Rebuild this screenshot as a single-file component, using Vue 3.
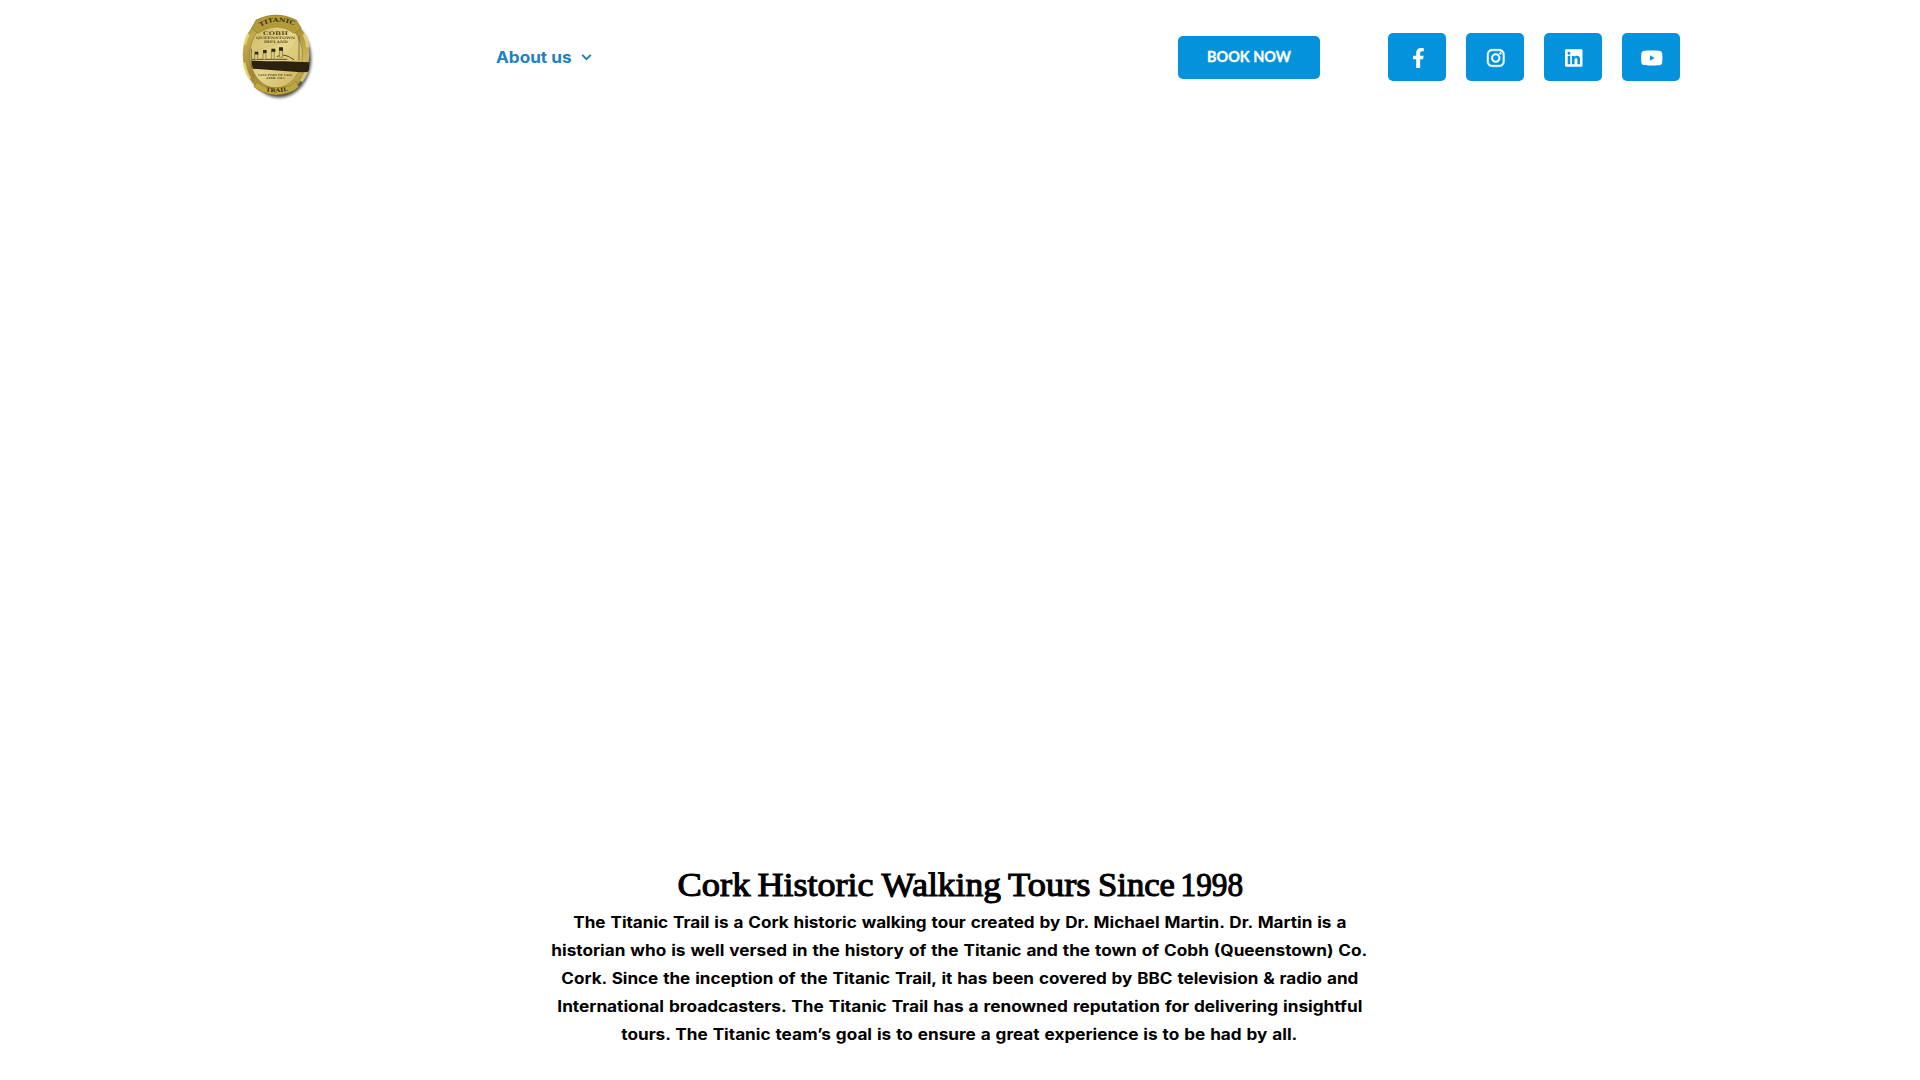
<script setup>
const socials = [
  { name: 'Facebook', w: 12, h: 20, box: '22 0 256 512', d: 'M279.1 288l14.3-92.7h-89v-60.1c0-25.3 12.4-50.1 52.2-50.1h40.4V6.3S260.4 0 225.4 0c-73.2 0-121.1 44.4-121.1 124.7v70.6H22.9V288h81.4v224h100.2V288z' },
  { name: 'Instagram', w: 17.5, h: 20, box: '0 0 448 512', d: 'M224.1 141c-63.6 0-114.9 51.3-114.9 114.9s51.3 114.9 114.9 114.9S339 319.5 339 255.900 287.700 141 224.100 141zm0 189.600c-41.100 0-74.700-33.500-74.700-74.700s33.500-74.700 74.700-74.700 74.700 33.500 74.700 74.700-33.600 74.700-74.700 74.700zm146.400-194.300c0 14.900-12 26.800-26.800 26.800-14.900 0-26.800-12-26.800-26.800s12-26.800 26.800-26.800 26.800 12 26.800 26.800zm76.100 27.200c-1.700-35.900-9.900-67.700-36.200-93.900-26.200-26.200-58-34.400-93.900-36.200-37-2.100-147.900-2.100-184.900 0-35.800 1.700-67.600 9.900-93.900 36.100s-34.400 58-36.200 93.900c-2.100 37-2.100 147.900 0 184.900 1.700 35.900 9.900 67.700 36.200 93.900s58 34.400 93.900 36.200c37 2.100 147.900 2.100 184.900 0 35.900-1.700 67.700-9.900 93.900-36.200 26.200-26.200 34.400-58 36.200-93.900 2.100-37 2.100-147.800 0-184.800zM398.800 388c-7.800 19.600-22.900 34.700-42.600 42.600-29.500 11.700-99.500 9-132.100 9s-102.700 2.600-132.100-9c-19.600-7.800-34.700-22.900-42.600-42.600-11.700-29.500-9-99.500-9-132.100s-2.600-102.700 9-132.100c7.800-19.600 22.900-34.700 42.600-42.600 29.500-11.700 99.500-9 132.100-9s102.700-2.600 132.100 9c19.600 7.800 34.700 22.900 42.600 42.600 11.700 29.500 9 99.500 9 132.100s2.700 102.700-9 132.100z', bold: true },
  { name: 'LinkedIn', w: 17.5, h: 20, box: '0 0 448 512', d: 'M416 32H31.900C14.300 32 0 46.500 0 64.300v383.400C0 465.500 14.300 480 31.900 480H416c17.600 0 32-14.500 32-32.300V64.300c0-17.800-14.400-32.300-32-32.300zM135.400 416H69V202.200h66.500V416zm-33.200-243c-21.300 0-38.500-17.300-38.500-38.500S80.900 96 102.200 96c21.200 0 38.500 17.300 38.500 38.500 0 21.300-17.200 38.500-38.500 38.500zm282.100 243h-66.400V312c0-24.800-.5-56.700-34.500-56.700-34.600 0-39.900 27-39.900 54.900V416h-66.400V202.200h63.700v29.200h.9c8.900-16.800 30.600-34.500 62.900-34.500 67.200 0 79.700 44.300 79.700 101.900V416z' },
  { name: 'YouTube', w: 22.5, h: 20, box: '-14 0 576 512', d: 'M549.655 124.083c-6.281-23.650-24.787-42.276-48.284-48.597C458.781 64 288 64 288 64S117.220 64 74.629 75.486c-23.497 6.322-42.003 24.947-48.284 48.597-11.412 42.867-11.412 132.305-11.412 132.305s0 89.438 11.412 132.305c6.281 23.650 24.787 41.500 48.284 47.821C117.220 448 288 448 288 448s170.780 0 213.371-11.486c23.497-6.321 42.003-24.171 48.284-47.821 11.412-42.867 11.412-132.305 11.412-132.305s0-89.438-11.412-132.305zM241 324V188l118 68z' },
]

const heading = [
  { t: 'Cork', x: 17.5, w: 73 },
  { t: 'Historic', x: 97.5, w: 116 },
  { t: 'Walking', x: 221.500, w: 119.5 },
  { t: 'Tours', x: 348, w: 82.5 },
  { t: 'Since', x: 438, w: 77 },
  { t: '1998', x: 520.500, w: 62.5 },
]

const lines = [
  { t: 'The Titanic Trail is a Cork historic walking tour created by Dr. Michael Martin. Dr. Martin is a', w: 773 },
  { t: 'historian who is well versed in the history of the Titanic and the town of Cobh (Queenstown) Co.', w: 816 },
  { t: 'Cork. Since the inception of the Titanic Trail, it has been covered by BBC television & radio and', w: 797 },
  { t: 'International broadcasters. The Titanic Trail has a renowned reputation for delivering insightful', w: 805 },
  { t: 'tours. The Titanic team’s goal is to ensure a great experience is to be had by all.', w: 676 },
]
</script>

<template>
  <div class="page">
    <header class="header">
      <svg class="logo" viewBox="0 0 285 300" role="img" aria-label="Titanic Trail">
        <defs>
          <linearGradient id="gold" x1="0" y1="0" x2="1" y2="1">
            <stop offset="0" stop-color="#8a7320" />
            <stop offset=".2" stop-color="#c2aa4c" />
            <stop offset=".45" stop-color="#a18630" />
            <stop offset=".75" stop-color="#cdb75a" />
            <stop offset="1" stop-color="#7d6618" />
          </linearGradient>
          <linearGradient id="face" x1="0" y1="0" x2="1" y2="1">
            <stop offset="0" stop-color="#cdb55c" />
            <stop offset=".5" stop-color="#e6d68e" />
            <stop offset="1" stop-color="#c9b058" />
          </linearGradient>
          <filter id="soft" x="-20%" y="-20%" width="140%" height="140%"><feGaussianBlur stdDeviation="4.500" /></filter>
          <path id="arcTop" d="M83 67Q139 29 201 63" />
          <path id="arcBottom" d="M99 253Q139 265 184 251" />
        </defs>
        <ellipse cx="147" cy="158" rx="97" ry="117" fill="#333" opacity=".85" filter="url(#soft)" />
        <ellipse cx="138" cy="146" rx="100" ry="119" fill="url(#gold)" />
        <g fill="none" stroke="#ecdc84" stroke-width="9" opacity=".8">
          <path d="M44 116Q47 99 56 84M222 84Q231 103 234 124M42 170Q47 200 60 218M214 226Q226 210 232 190" />
        </g>
        <ellipse cx="138" cy="147" rx="79" ry="99" fill="url(#face)" stroke="#806c20" stroke-width="1.5" />
        <path d="M65 67L78 42Q138 12 199 42L214 67L193 82Q139 43 84 82Z" fill="#b39b3a" stroke="#806d17" stroke-width="1.5" />
        <path d="M80 228L96 239Q139 252 181 239L197 225L206 242Q187 263 139 267Q94 263 72 242Z" fill="#c0a840" stroke="#806d17" stroke-width="1.500" />
        <g class="engraving">
          <text font-size="17"><textPath href="#arcTop" textLength="106" lengthAdjust="spacingAndGlyphs" startOffset="9">TITANIC</textPath></text>
          <g opacity=".8">
            <text x="99" y="86" font-size="15" textLength="75" lengthAdjust="spacingAndGlyphs">COBH</text>
            <text x="78" y="98" font-size="10" textLength="118" lengthAdjust="spacingAndGlyphs">QUEENSTOWN</text>
            <text x="102" y="112" font-size="10" textLength="72" lengthAdjust="spacingAndGlyphs">IRELAND</text>
            <text x="85" y="210" font-size="8" textLength="102" lengthAdjust="spacingAndGlyphs">LAST PORT OF CALL</text>
            <text x="109" y="220" font-size="8" textLength="55" lengthAdjust="spacingAndGlyphs">APRIL 1912</text>
          </g>
          <text font-size="16"><textPath href="#arcBottom" textLength="68" lengthAdjust="spacingAndGlyphs" startOffset="8">TRAIL</textPath></text>
        </g>
        <path d="M64 164L110 166L164 166L238 169L237 192L233 198L213 199L68 188Z" fill="#2a2110" />
        <path d="M66 160H172M140 152Q158 142 178 153L192 161" fill="none" stroke="#5c4d20" stroke-width="3" />
        <g fill="#2e270e">
          <path d="M74 137h11v9H74zM99 132h11v9H99zM124 128h12v10h-12zM147 124h12v11h-12z" />
        </g>
        <g fill="#dccb7c" stroke="#5c4d20" stroke-width="1.500">
          <path d="M74 145h9v16h-9zM99 141h9v20h-9zM124 137h9v23h-9zM148 134h10v20h-10z" />
        </g>
        <path d="M207 91V164M64 128V184" fill="none" stroke="#514516" stroke-width="2" />
        <path d="M64 137L207 94M170 154L207 94" fill="none" stroke="#806d30" stroke-width=".8" opacity=".5" />
      </svg>

      <a class="menu">
        <svg class="label" width="77" height="24"><text x="0" y="17.5" textLength="75.5" lengthAdjust="spacingAndGlyphs">About us</text></svg>
        <svg class="chevron" viewBox="0 0 11 8"><path d="M1.200 1.900L5.500 6.200L9.800 1.900" /></svg>
      </a>

      <a class="book">
        <svg width="84" height="20"><text x="0" y="15.300" textLength="84" lengthAdjust="spacingAndGlyphs">BOOK NOW</text></svg>
      </a>

      <nav class="socials">
        <a v-for="s in socials" :key="s.name" class="social" :aria-label="s.name">
          <svg :viewBox="s.box" :width="s.w" :height="s.h" :class="{ bold: s.bold }"><path :d="s.d" /></svg>
        </a>
      </nav>
    </header>

    <main class="intro">
      <h1>
        <svg width="600" height="48">
          <text y="36"><tspan v-for="h in heading" :key="h.t" :x="h.x" :textLength="h.w" lengthAdjust="spacingAndGlyphs">{{ h.t }}</tspan></text>
        </svg>
      </h1>
      <p>
        <svg v-for="l in lines" :key="l.t" :width="l.w" height="28">
          <text x="-0.7" y="20" :textLength="l.w" lengthAdjust="spacingAndGlyphs">{{ l.t }}</text>
        </svg>
      </p>
    </main>
  </div>
</template>

<style>
body {
  background: #fff;
  overflow: hidden;
}
</style>

<style scoped>
.page {
  width: 1440px;
  height: 1080px;
  margin: 0 auto;
  display: flex;
  flex-direction: column;
  font-family: Inter, "Open Sans", sans-serif;
}
svg {
  display: block;
  overflow: visible;
}
.header {
  height: 114px;
  display: flex;
  align-items: center;
}
.logo {
  width: 95px;
  height: 100px;
  margin: -2px 0 0 -10px;
}
.engraving {
  font-family: "DejaVu Serif", serif;
  font-weight: 700;
  fill: #3b2f0c;
}
.menu {
  display: flex;
  align-items: center;
  gap: 8px;
  margin-left: 171px;
}
.label {
  font-size: 15.5px;
  font-weight: 650;
  fill: #1b82bf;
}
.chevron {
  width: 11px;
  height: 8px;
  fill: none;
  stroke: #1b82bf;
  stroke-width: 2;
}
.book {
  width: 142px;
  height: 43px;
  margin-left: auto;
  margin-right: 68px;
  display: flex;
  align-items: center;
  justify-content: center;
  border-radius: 5px;
  background: #0492dc;
  fill: #fff;
  stroke: #fff;
  stroke-width: 0.3px;
  font-family: Lato, sans-serif;
  font-size: 14.5px;
  font-weight: 700;
}
.socials {
  display: flex;
  gap: 20px;
}
.social {
  width: 58px;
  height: 48px;
  padding: 1px 0 0 1px;
  box-sizing: border-box;
  display: flex;
  align-items: center;
  justify-content: center;
  border-radius: 5px;
  background: #0492dc;
  fill: #fff;
}
.bold {
  stroke: #fff;
  stroke-width: 12;
}
.intro {
  margin-top: 746px;
  display: flex;
  flex-direction: column;
  align-items: center;
}
h1 {
  margin: 0;
  height: 48px;
  font-family: "Liberation Serif", serif;
  font-size: 34.5px;
  font-weight: 400;
  stroke: #000;
  stroke-width: 1.1px;
}
p {
  margin: 0;
  display: flex;
  flex-direction: column;
  align-items: center;
  font-size: 15.4px;
  font-weight: 700;
  word-spacing: 0.8px;
}
</style>
